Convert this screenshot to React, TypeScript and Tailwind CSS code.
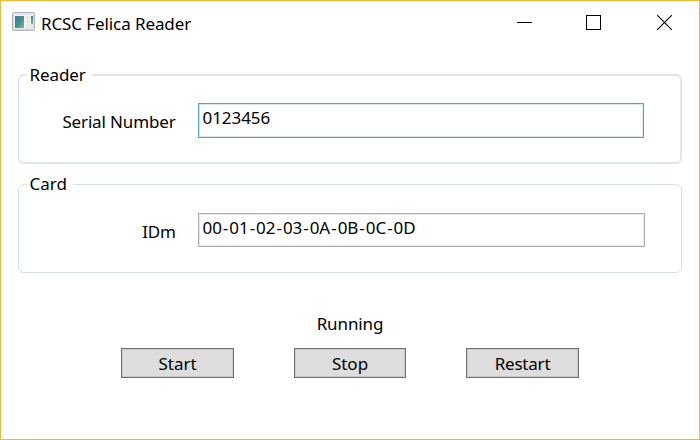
import { Fragment, type ReactNode } from "react";

function AppIcon() {
  return (
    <svg width="24" height="20" viewBox="0 0 24 20">
      <defs>
        <linearGradient id="pane" x1="0" y1="0" x2="1" y2="1">
          <stop offset="0" stopColor="#4676a8" />
          <stop offset="0.5" stopColor="#468f8c" />
          <stop offset="1" stopColor="#74bd92" />
        </linearGradient>
        <linearGradient id="strip" x1="0" y1="0" x2="0" y2="1">
          <stop offset="0" stopColor="#4676a8" />
          <stop offset="1" stopColor="#74bd92" />
        </linearGradient>
      </defs>
      <rect x="0.5" y="0.5" width="22" height="18" rx="1" fill="#d9dcdf" stroke="#b1b4b7" />
      <rect x="1.5" y="1.5" width="20" height="1.5" fill="#e3e7ea" />
      <rect x="2" y="3" width="19" height="13.5" fill="#f1f2f3" />
      <rect x="3" y="4" width="9" height="12" fill="url(#pane)" />
      <rect x="14" y="4" width="4" height="7" fill="#e6e8ea" />
      <rect x="14" y="12" width="7" height="4" fill="#e6e8ea" />
      <rect x="19" y="4" width="2" height="8" fill="url(#strip)" />
    </svg>
  );
}

function CaptionButtons() {
  return (
    <div className="flex items-center">
      <svg width="15" height="15" viewBox="0 0 15 15" shapeRendering="crispEdges">
        <path d="M0 7.5H15" stroke="#000" />
      </svg>
      <svg className="ml-[54px]" width="15" height="15" viewBox="0 0 15 15" shapeRendering="crispEdges">
        <rect x="0.5" y="0.5" width="14" height="14" fill="none" stroke="#000" />
      </svg>
      <svg className="ml-14" width="15" height="15" viewBox="0 0 15 15">
        <path d="M0 0L15 15M15 0L0 15" stroke="#000" strokeWidth="1.1" />
      </svg>
    </div>
  );
}

function Field({ label, labelClass, children }: { label: string; labelClass: string; children: ReactNode }) {
  return (
    <div className="flex">
      <span className={`mt-[7px] mr-[22.5px] w-[156.5px] text-right whitespace-nowrap ${labelClass}`}>{label}</span>
      {children}
    </div>
  );
}

function Button({ text, className }: { text: string; className: string }) {
  return (
    <button
      className={`flex h-[30px] items-center justify-center border border-[#707070] bg-[#dddddd] pt-px shadow-[inset_0_0_0_1px_#c9c9c9] ${className}`}
    >
      {text}
    </button>
  );
}

const idm = ["00", "01", "02", "03", "0A", "0B", "0C", "0D"];

export default function App() {
  return (
    <div className="flex h-[440px] w-[700px] flex-col border border-[#f0b93a] bg-white font-['Noto_Sans','Open_Sans',sans-serif] text-[17px] leading-6 text-black">
      <header className="flex h-[62px] items-start justify-between pt-[11px] pr-[27px] pl-[11px]">
        <div className="flex">
          <AppIcon />
          <h1 className="ml-[5px] tracking-[-0.1px]">RCSC Felica Reader</h1>
        </div>
        <div className="mt-[3px]">
          <CaptionButtons />
        </div>
      </header>

      <main className="flex flex-col px-[17px]">
        <fieldset className="h-[101px] rounded-[6px] border-2 border-l border-[#dfe6eb] border-l-[#d5dfe5] pl-2">
          <legend className="h-6 pr-[6px] pl-[2.5px] tracking-[-0.1px]">Reader</legend>
          <div className="-ml-2 pt-4">
            <Field label="Serial Number" labelClass="tracking-[-0.15px]">
              <div className="h-[35px] w-[446px] border border-[#569de5] pt-[2px] pl-[3.5px] tracking-[-0.05px] shadow-[inset_0_0_0_1px_#d6e7f8]">
                0123456
              </div>
            </Field>
          </div>
        </fieldset>

        <fieldset className="mt-2 h-[101px] rounded-[6px] border border-[#d5dfe5] pl-2">
          <legend className="h-[25px] pr-[6px] pl-[2.5px]">Card</legend>
          <div className="-ml-2 pt-4">
            <Field label="IDm" labelClass="tracking-[-0.3px]">
              <div className="h-[34px] w-[447px] border border-[#abadb3] pt-[2px] pl-[3.5px] tracking-[-0.05px] shadow-[inset_0_0_0_1px_#e8e8eb]">
                {idm.map((octet, i) => (
                  <Fragment key={octet}>
                    {i > 0 && <span className="mx-px">-</span>}
                    {octet}
                  </Fragment>
                ))}
              </div>
            </Field>
          </div>
        </fieldset>
      </main>

      <p className="mt-[39px] text-center tracking-[-0.1px]">Running</p>
      <div className="mt-3 flex justify-center gap-[60px]">
        <Button text="Start" className="w-[113px]" />
        <Button text="Stop" className="w-[112px]" />
        <Button text="Restart" className="w-[113px] tracking-[-0.2px]" />
      </div>
    </div>
  );
}
